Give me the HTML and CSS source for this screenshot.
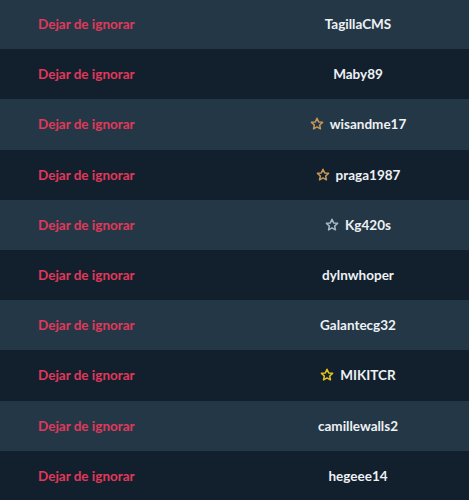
FILE: index.html
```html
<!DOCTYPE html>
<html lang="es">
<head>
<meta charset="utf-8">
<link rel="stylesheet" href="styles.css">
</head>
<body>
<div class="list">
  <div class="row light"><span class="action">Dejar de ignorar</span><span class="user">TagillaCMS</span></div>
  <div class="row dark"><span class="action">Dejar de ignorar</span><span class="user">Maby89</span></div>
  <div class="row light"><span class="action">Dejar de ignorar</span><span class="user"><svg class="star bronze" viewBox="0 0 14 14"><path d="M7 1.3l1.65 3.6 3.9.45-2.9 2.65.8 3.85L7 9.9l-3.45 1.95.8-3.85-2.9-2.65 3.9-.45z"/></svg>wisandme17</span></div>
  <div class="row dark"><span class="action">Dejar de ignorar</span><span class="user"><svg class="star bronze" viewBox="0 0 14 14"><path d="M7 1.3l1.65 3.6 3.9.45-2.9 2.65.8 3.85L7 9.9l-3.45 1.95.8-3.85-2.9-2.65 3.9-.45z"/></svg>praga1987</span></div>
  <div class="row light"><span class="action">Dejar de ignorar</span><span class="user"><svg class="star silver" viewBox="0 0 14 14"><path d="M7 1.3l1.65 3.6 3.9.45-2.9 2.65.8 3.85L7 9.9l-3.45 1.95.8-3.85-2.9-2.65 3.9-.45z"/></svg>Kg420s</span></div>
  <div class="row dark"><span class="action">Dejar de ignorar</span><span class="user">dylnwhoper</span></div>
  <div class="row light"><span class="action">Dejar de ignorar</span><span class="user">Galantecg32</span></div>
  <div class="row dark"><span class="action">Dejar de ignorar</span><span class="user"><svg class="star gold" viewBox="0 0 14 14"><path d="M7 1.3l1.65 3.6 3.9.45-2.9 2.65.8 3.85L7 9.9l-3.45 1.95.8-3.85-2.9-2.65 3.9-.45z"/></svg>MIKITCR</span></div>
  <div class="row light"><span class="action">Dejar de ignorar</span><span class="user">camillewalls2</span></div>
  <div class="row dark"><span class="action">Dejar de ignorar</span><span class="user">hegeee14</span></div>
</div>
</body>
</html>
```
FILE: styles.css
```css
html, body {
  margin: 0;
  padding: 0;
  background: #121f2d;
  overflow: hidden;
}
.list {
  margin-top: -1px;
  font-family: Lato, "Noto Sans", sans-serif;
  font-weight: 700;
  font-size: 13.5px;
}
.row {
  display: grid;
  grid-template-columns: 247px 1fr;
  align-items: center;
  height: 50.2px;
}
.light { background: #233746; }
.dark { background: #121f2d; }
.action {
  color: #e0395a;
  padding-left: 38px;
}
.user {
  color: #eef1f4;
  display: flex;
  justify-content: center;
  align-items: center;
  gap: 6px;
}
.star {
  width: 14px;
  height: 14px;
  fill: none;
  stroke-width: 1.5;
  stroke-linejoin: round;
}
.bronze { stroke: #c8975a; }
.silver { stroke: #a7b8c4; }
.gold { stroke: #e6c31c; }
```
